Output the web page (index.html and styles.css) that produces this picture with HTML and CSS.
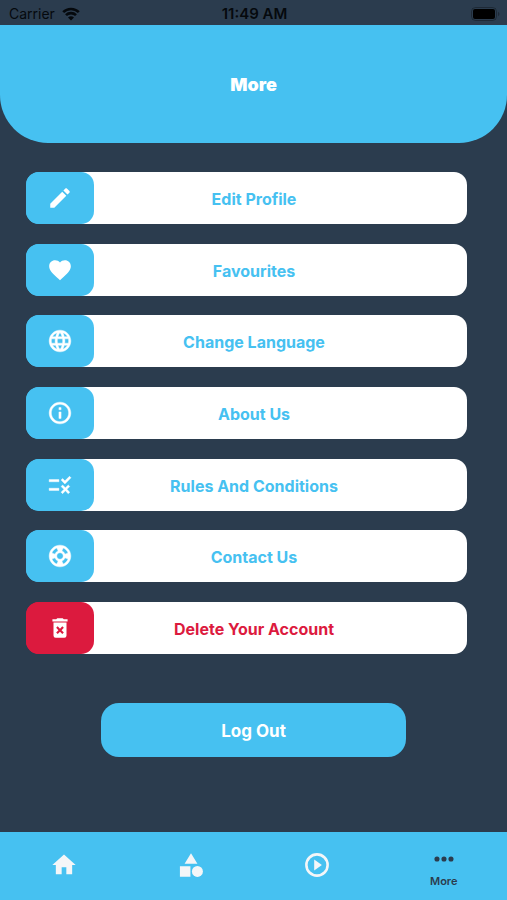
FILE: index.html
```html
<!DOCTYPE html>
<html lang="en">
<head>
<meta charset="utf-8">
<meta name="viewport" content="width=device-width, initial-scale=1">
<title>More</title>
<link rel="stylesheet" href="styles.css">
</head>
<body>
<div class="status">
  <div class="status-network">
    <span>Carrier</span>
    <svg class="wifi" viewBox="0 0 18 14" aria-hidden="true"><path d="M1.200 5.200a11 11 0 0 1 15.600 0M4 8.200a7 7 0 0 1 10 0" fill="none" stroke="currentColor" stroke-width="2.600"/><path d="M9 13.600l-3-3a4.300 4.300 0 0 1 6 0z"/></svg>
  </div>
  <span class="status-time">11:49 AM</span>
  <svg class="battery" viewBox="0 0 29 14" aria-hidden="true"><rect x=".5" y=".5" width="25" height="13" rx="4" fill="none" stroke="currentColor" opacity=".3"/><rect x="2" y="2" width="22" height="10" rx="2"/><path d="M27 4.800c2 .8 2 3.600 0 4.400z" opacity=".3"/></svg>
</div>
<header class="header"><h1>More</h1></header>
<main class="content">
  <ul class="menu">
    <li><a class="item" href="#profile"><span class="badge"><svg class="icon" viewBox="0 0 24 24" aria-hidden="true"><path d="M3 17.250V21h3.750L17.810 9.940l-3.750-3.750L3 17.250zM20.710 7.040c.39-.39.39-1.020 0-1.410l-2.340-2.340c-.39-.39-1.020-.39-1.410 0l-1.830 1.830 3.750 3.750 1.830-1.830z"/></svg></span><span class="label">Edit Profile</span></a></li>
    <li><a class="item" href="#favourites"><span class="badge"><svg class="icon" viewBox="0 0 24 24" aria-hidden="true"><path d="M12 21.350l-1.450-1.320C5.400 15.360 2 12.280 2 8.500 2 5.420 4.420 3 7.500 3c1.740 0 3.410.81 4.500 2.090C13.090 3.810 14.760 3 16.500 3 19.580 3 22 5.420 22 8.500c0 3.780-3.400 6.860-8.550 11.540L12 21.350z"/></svg></span><span class="label">Favourites</span></a></li>
    <li><a class="item" href="#language"><span class="badge"><svg class="icon heavy" viewBox="0 0 24 24" aria-hidden="true"><path d="M11.990 2C6.470 2 2 6.480 2 12s4.470 10 9.990 10C17.520 22 22 17.520 22 12S17.520 2 11.990 2zm6.930 6h-2.950c-.32-1.250-.78-2.450-1.380-3.560 1.840.63 3.370 1.910 4.330 3.560zM12 4.040c.83 1.200 1.480 2.530 1.910 3.960h-3.820c.43-1.430 1.080-2.760 1.910-3.960zM4.260 14C4.100 13.360 4 12.690 4 12s.1-1.360.26-2h3.380c-.08.66-.14 1.320-.14 2s.06 1.340.14 2H4.260zm.82 2h2.950c.32 1.250.78 2.450 1.380 3.560-1.840-.63-3.370-1.900-4.330-3.560zm2.950-8H5.080c.96-1.660 2.490-2.930 4.330-3.560C8.810 5.550 8.350 6.750 8.030 8zM12 19.960c-.83-1.200-1.480-2.530-1.910-3.960h3.820c-.43 1.430-1.080 2.760-1.910 3.960zM14.340 14H9.660c-.09-.66-.16-1.320-.16-2s.07-1.350.16-2h4.680c.09.65.16 1.320.16 2s-.07 1.340-.16 2zm.25 5.560c.6-1.110 1.060-2.310 1.380-3.560h2.950c-.96 1.650-2.490 2.930-4.330 3.560zM16.360 14c.08-.66.14-1.320.14-2s-.06-1.340-.14-2h3.380c.16.64.26 1.310.26 2s-.1 1.360-.26 2h-3.380z"/></svg></span><span class="label">Change Language</span></a></li>
    <li><a class="item" href="#about"><span class="badge"><svg class="icon heavy" viewBox="0 0 24 24" aria-hidden="true"><path d="M11 7h2v2h-2zm0 4h2v6h-2zm1-9C6.480 2 2 6.480 2 12s4.480 10 10 10 10-4.480 10-10S17.520 2 12 2zm0 18c-4.410 0-8-3.590-8-8s3.590-8 8-8 8 3.590 8 8-3.590 8-8 8z"/></svg></span><span class="label">About Us</span></a></li>
    <li><a class="item" href="#rules"><span class="badge"><svg class="icon heavy" viewBox="0 0 24 24" aria-hidden="true"><path d="M16.540 11L13 7.460l1.410-1.410 2.120 2.120 4.240-4.240 1.410 1.410L16.540 11zM11 7H2v2h9V7zm10 6.410L19.590 12 17 14.590 14.410 12 13 13.410 15.590 16 13 18.590 14.410 20 17 17.410 19.590 20 21 18.590 18.410 16 21 13.410zM11 15H2v2h9v-2z"/></svg></span><span class="label">Rules And Conditions</span></a></li>
    <li><a class="item" href="#contact"><span class="badge"><svg class="icon heavy" viewBox="0 0 24 24" aria-hidden="true"><path d="M12 2C6.480 2 2 6.480 2 12s4.480 10 10 10 10-4.480 10-10S17.520 2 12 2zm7.460 7.120l-2.780 1.150c-.51-1.360-1.580-2.440-2.950-2.940l1.150-2.780c2.100.8 3.770 2.470 4.580 4.570zM12 15c-1.660 0-3-1.340-3-3s1.340-3 3-3 3 1.340 3 3-1.340 3-3 3zM9.130 4.540l1.170 2.780c-1.380.5-2.470 1.590-2.980 2.970L4.540 9.130c.81-2.110 2.480-3.780 4.590-4.590zM4.540 14.870l2.780-1.150c.51 1.380 1.590 2.460 2.970 2.960l-1.170 2.780c-2.100-.81-3.770-2.480-4.580-4.590zm10.340 4.590l-1.150-2.780c1.370-.51 2.450-1.590 2.950-2.970l2.780 1.170c-.81 2.100-2.480 3.770-4.580 4.580z"/></svg></span><span class="label">Contact Us</span></a></li>
    <li><a class="item danger" href="#delete"><span class="badge"><svg class="icon" viewBox="0 0 24 24" aria-hidden="true"><path fill-rule="evenodd" d="M6 19a2 2 0 0 0 2 2h8a2 2 0 0 0 2-2V7H6v12zM8.460 11.880l1.410-1.410L12 12.590l2.120-2.120 1.410 1.410L13.410 14l2.120 2.120-1.410 1.410L12 15.410l-2.120 2.120-1.410-1.410L10.590 14zM15.500 4l-1-1h-5l-1 1H5v2h14V4z"/></svg></span><span class="label">Delete Your Account</span></a></li>
  </ul>
  <button class="logout" type="button">Log Out</button>
</main>
<nav class="tabs">
  <a class="tab" href="#home" aria-label="Home"><svg class="tab-icon" viewBox="0 0 24 24" aria-hidden="true"><path d="M10 20v-6h4v6h5v-8h3L12 3 2 12h3v8z"/></svg></a>
  <a class="tab" href="#categories" aria-label="Categories"><svg class="tab-icon" viewBox="0 0 24 24" aria-hidden="true"><path d="M12 2l5.500 9h-11zM2.500 13h9v9h-9z"/><circle cx="17.500" cy="17.500" r="4.700"/></svg></a>
  <a class="tab" href="#videos" aria-label="Videos"><svg class="tab-icon" viewBox="0 0 24 24" aria-hidden="true"><circle cx="12" cy="12" r="9.100" fill="none" stroke="currentColor" stroke-width="2.200"/><path d="M9.600 7.200v9.600l6.600-4.800z"/></svg></a>
  <a class="tab active" href="#more" aria-current="page"><svg class="tab-icon" viewBox="0 0 24 24" aria-hidden="true"><circle cx="6" cy="12" r="2.200"/><circle cx="12" cy="12" r="2.200"/><circle cx="18" cy="12" r="2.200"/></svg><span>More</span></a>
</nav>
</body>
</html>
```
FILE: styles.css
```css
:root {
  --navy: #2b3c4e;
  --sky: #46c1f1;
  --red: #dc1a3e;
}

* { box-sizing: border-box; }

body {
  margin: 0;
  min-height: 100vh;
  display: flex;
  flex-direction: column;
  background: var(--navy);
  font-family: Inter, "Liberation Sans", sans-serif;
}

svg { display: block; fill: currentColor; }
a { color: inherit; text-decoration: none; }

.status {
  height: 25px;
  padding: 2px 7px 0 9px;
  display: grid;
  grid-template-columns: 1fr auto 1fr;
  align-items: center;
  color: #05090d;
  font-size: 14px;
  line-height: 20px;
}
.status-network { display: flex; align-items: center; gap: 7px; }
.status-time { font-size: 15px; font-weight: 600; }
.wifi { width: 18px; height: 14px; }
.battery { width: 29px; height: 14px; justify-self: end; color: #000; }

.header {
  height: 118px;
  padding-top: 2px;
  display: flex;
  align-items: center;
  justify-content: center;
  background: var(--sky);
  border-radius: 0 0 48px 48px;
  color: #fff;
}
.header h1 { margin: 0; font-size: 18px; line-height: 24px; font-weight: 900; }

.content {
  flex: 1;
  display: flex;
  flex-direction: column;
  padding: 29px 0 75px;
}
.menu {
  flex: 1;
  display: flex;
  flex-direction: column;
  justify-content: space-between;
  margin: 0 40px 49px 26px;
  padding: 0;
  list-style: none;
}
.item {
  height: 52px;
  display: grid;
  grid-template-columns: 68px 1fr 53px;
  align-items: center;
  background: linear-gradient(90deg, currentColor 34px, #fff 34px);
  border-radius: 13px;
  color: var(--sky);
  font-size: 16px;
  line-height: 20px;
  font-weight: 700;
  text-align: center;
}
.badge {
  height: 52px;
  display: flex;
  align-items: center;
  justify-content: center;
  background: var(--sky);
  border-radius: 13px;
  color: #fff;
}
.label { padding-top: 2px; }
.icon { width: 26px; height: 26px; }
.heavy { stroke: currentColor; stroke-width: 0.4; }
.danger { color: var(--red); }
.danger .badge { background: var(--red); }

.logout {
  align-self: center;
  width: 60%;
  height: 54px;
  padding: 2px 0 0;
  border: 0;
  border-radius: 18px;
  background: var(--sky);
  color: #fff;
  font: 700 17px/24px Inter, "Liberation Sans", sans-serif;
}

.tabs {
  height: 68px;
  padding-left: 1px;
  display: grid;
  grid-template-columns: repeat(4, 1fr);
  background: var(--sky);
  color: #f4f6f8;
}
.tab {
  display: flex;
  flex-direction: column;
  align-items: center;
  justify-content: center;
  padding-bottom: 3px;
}
.tab-icon { width: 28px; height: 28px; }
.active {
  padding: 2px 0 0;
  color: var(--navy);
  font-size: 11px;
  line-height: 16px;
  font-weight: 600;
}
```
